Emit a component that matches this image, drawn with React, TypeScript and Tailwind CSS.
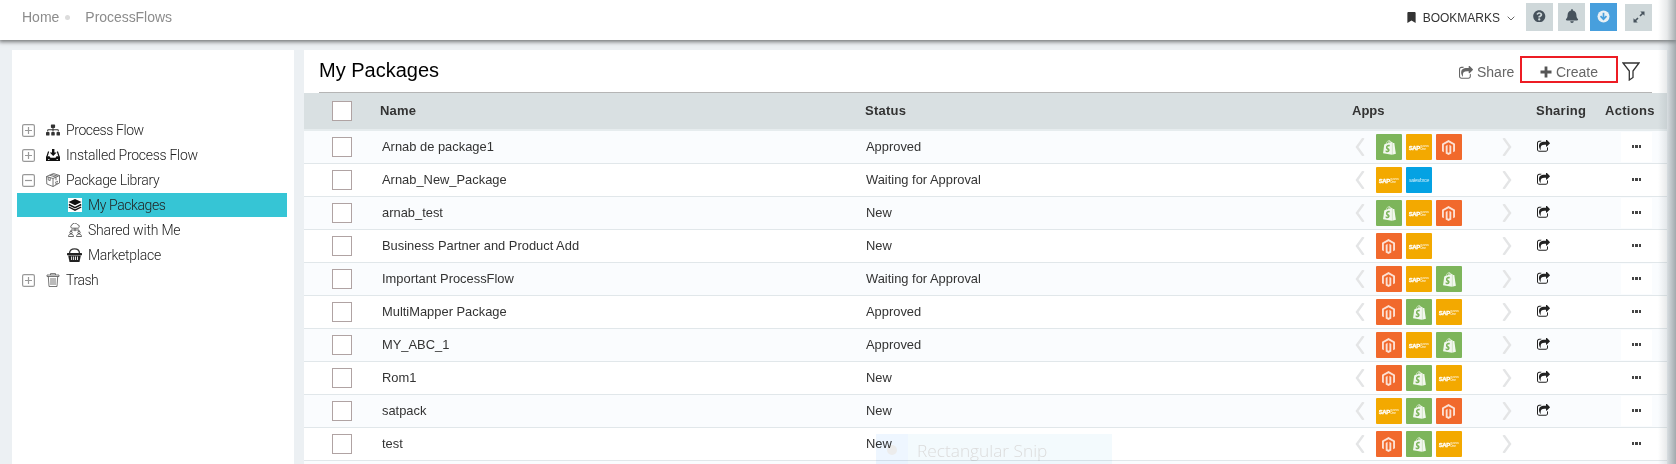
import React from "react";
import { FaSitemap, FaMagento, FaShopify, FaBell, FaBookmark, FaQuestionCircle } from "react-icons/fa";

const SHARE =
  "M1408 989v259q0 119-84.5 203.5t-203.5 84.5h-832q-119 0-203.5-84.5t-84.5-203.5v-832q0-119 84.5-203.5t203.5-84.5h255q13 0 22.5 9.5t9.5 22.5q0 27-26 32-77 26-133 60-10 4-16 4h-112q-66 0-113 47t-47 113v832q0 66 47 113t113 47h832q66 0 113-47t47-113v-214q0-19 18-29 28-13 54-37 16-16 35-8 21 9 21 29zm237-496l-384 384q-18 19-45 19-12 0-25-5-39-17-39-59v-192h-160q-323 0-438 131-119 137-74 473 3 23-20 34-8 2-12 2-16 0-26-13-10-14-21-31t-39.5-68.5-49.5-99.5-38.5-114-17.5-122q0-49 3.5-91t14-90 28-88 47-81.5 68.5-74 94.5-61.5 124.5-48.5 159.5-30.5 196.5-11h160v-192q0-42 39-59 13-5 25-5 26 0 45 19l384 384q19 19 19 45t-19 45z";

function ShareIcon({ className }: { className: string }) {
  return (
    <svg viewBox="0 30 1664 1536" className={className} fill="currentColor">
      <path d={SHARE} />
    </svg>
  );
}

function Toggle({ open }: { open?: boolean }) {
  return (
    <svg viewBox="0 0 13 13" className="h-[13px] w-[13px] shrink-0" fill="none" stroke="#999">
      <rect x="0.6" y="0.6" width="11.8" height="11.8" rx="1.5" strokeWidth="1.2" />
      <path d={open ? "M3 6.5h7" : "M3 6.5h7M6.5 3v7"} strokeWidth="1.2" />
    </svg>
  );
}

const InstallIcon = () => (
  <svg viewBox="0 0 14 14" className="h-[14px] w-[14px]">
    <path d="M6 1h2.4v3.5h2.2L7.2 8 3.800 4.500H6z" fill="#111" />
    <path d="M2.600 3.500 1 8.500M11.400 3.500 13 8.500" stroke="#111" strokeWidth="1.200" />
    <path d="M0 8.300h3.500l1 1.500h5l1-1.500H14V13H0z" fill="#111" />
    <path d="M2 11.500h1.500M10.500 11.500H12" stroke="#fff" strokeWidth="0.800" />
  </svg>
);

const BoxIcon = () => (
  <svg viewBox="0 0 14 14" className="h-[14px] w-[14px]" fill="none" stroke="#555" strokeWidth="0.8">
    <path d="M0.500 3.500 7.500 0.500 13.500 2.500V10L7 13.500 0.800 11zM0.500 3.500 7 5.500 13.500 2.500M7 5.500v8M3.500 2.200 10 4.200v3M5.500 1.400 12 3.200M2.200 4.100v2.800l2 .7V4.700" />
    <path d="M9 9.500l3-1.300M9 11.300l3-1.400" />
  </svg>
);

const LayersIcon = () => (
  <svg viewBox="0 0 14 14" className="h-[14px] w-[14px] bg-white">
    <path d="M7 1 13.500 4 7 7.200 0.500 4z" fill="#111" />
    <path d="M.8 6.500 7 9.600l6.200-3.100M.8 9 7 12.200 13.200 9" fill="none" stroke="#111" strokeWidth="1.400" />
  </svg>
);

const CloudUsersIcon = () => (
  <svg viewBox="0 0 14 14" className="h-[14px] w-[14px]" fill="none" stroke="#555" strokeWidth="0.9">
    <path d="M4 5.200a1.600 1.600 0 0 1-.1-3.100A3 3 0 0 1 9.400 1.600a1.900 1.900 0 0 1 .8 3.600zM7 5.200v3M3 8.200V7h8v1.200" />
    <circle cx="3" cy="9.500" r="1.200" />
    <circle cx="11" cy="9.500" r="1.200" />
    <path d="M.5 13.500c0-3.400 5-3.400 5 0zM8.500 13.500c0-3.400 5-3.400 5 0z" />
  </svg>
);

const BasketIcon = () => (
  <svg viewBox="0 0 15 14" className="h-[14px] w-[15px] shrink-0">
    <path d="M2.500 5.500C2.500 2.500 4.500.9 7.500.9s5 1.600 5 4.600" fill="none" stroke="#333" strokeWidth="1.300" />
    <rect x="0" y="5" width="15" height="2.300" rx="0.600" fill="#222" />
    <path d="M1.200 7.500h12.600L12.500 14h-10z" fill="#222" />
    <path d="M4.600 8.500v3.500M6.600 8.500v3.500M8.500 8.500v3.500M10.500 8.500v3.500" stroke="#fff" strokeWidth="0.900" />
  </svg>
);

const TrashIcon = () => (
  <svg viewBox="0 0 14 14" className="h-[14px] w-[14px]" fill="none" stroke="#666" strokeWidth="0.9">
    <path d="M1 3.500V2h12v1.500zM4.500 2V.6h5V2M2.300 3.500l.7 10h8l.7-10M5 5v7M7 5v7M9 5v7" />
  </svg>
);

type Node = { label: string; icon: React.ReactNode; toggle?: "plus" | "minus"; active?: boolean; track: string };
const nodes: Node[] = [
  { label: "Process Flow", toggle: "plus", icon: <FaSitemap size={14} color="#333" />, track: "tracking-[-0.4px]" },
  { label: "Installed Process Flow", toggle: "plus", icon: <InstallIcon />, track: "tracking-[-0.27px]" },
  { label: "Package Library", toggle: "minus", icon: <BoxIcon />, track: "tracking-[-0.3px]" },
  { label: "My Packages", icon: <LayersIcon />, active: true, track: "tracking-[-0.4px]" },
  { label: "Shared with Me", icon: <CloudUsersIcon />, track: "tracking-[-0.2px]" },
  { label: "Marketplace", icon: <BasketIcon />, track: "tracking-[-0.25px]" },
  { label: "Trash", toggle: "plus", icon: <TrashIcon />, track: "tracking-[-0.45px]" },
];

type App = "shop" | "sap" | "mag" | "sf";
const rows: { name: string; status: string; apps: App[]; share: boolean }[] = [
  { name: "Arnab de package1", status: "Approved", apps: ["shop", "sap", "mag"], share: true },
  { name: "Arnab_New_Package", status: "Waiting for Approval", apps: ["sap", "sf"], share: true },
  { name: "arnab_test", status: "New", apps: ["shop", "sap", "mag"], share: true },
  { name: "Business Partner and Product Add", status: "New", apps: ["mag", "sap"], share: true },
  { name: "Important ProcessFlow", status: "Waiting for Approval", apps: ["mag", "sap", "shop"], share: true },
  { name: "MultiMapper Package", status: "Approved", apps: ["mag", "shop", "sap"], share: true },
  { name: "MY_ABC_1", status: "Approved", apps: ["mag", "sap", "shop"], share: true },
  { name: "Rom1", status: "New", apps: ["mag", "shop", "sap"], share: true },
  { name: "satpack", status: "New", apps: ["sap", "shop", "mag"], share: true },
  { name: "test", status: "New", apps: ["mag", "shop", "sap"], share: false },
];

function Tile({ app }: { app: App }) {
  const base = "flex h-[26px] w-[26px] items-center justify-center rounded-[1px] text-white ";
  if (app === "shop") return <div className={base + "bg-[#7db55b]"}><FaShopify size={15} className="opacity-90" /></div>;
  if (app === "mag") return <div className={base + "bg-[#f1692c]"}><FaMagento size={15} className="-ml-px opacity-80" /></div>;
  if (app === "sf")
    return <div className={base + "bg-[#04a2e3] text-[5px] leading-none tracking-[-0.3px] text-white/80 italic"}>salesforce</div>;
  return (
    <div className={base + "bg-[#f3a900] pt-px leading-none"}>
      <span className="text-[6px] font-bold tracking-[-0.5px] [-webkit-text-stroke:0.3px_white]">SAP</span>
      <span className="ml-[0.5px] flex w-[9px] flex-col overflow-hidden text-[3px] leading-[2.5px] opacity-80">
        <span className="tracking-[-0.3px]">Business</span>
        <span className="font-bold">One</span>
      </span>
    </div>
  );
}

function Arrow({ right }: { right?: boolean }) {
  return (
    <svg viewBox="0 0 10 18" className="h-[18px] w-[10px] shrink-0" fill="none" stroke="#e4e5e6" strokeWidth="2.4">
      <path d={right ? "M1.500 0 8 9 1.500 18" : "M8.500 0 2 9 8.500 18"} />
    </svg>
  );
}

const cols = "grid grid-cols-[78px_484px_486px_186px_66px_63px]";
const Box = () => <div className="ml-7 h-5 w-5 border border-[#b0a3a3] bg-white" />;

export default function App() {
  return (
    <div className="relative flex h-[464px] w-[1676px] flex-col overflow-hidden bg-[#ecf0f3] font-['Liberation_Sans',Arial,sans-serif] text-[#333]">
      <header className="z-10 flex h-10 shrink-0 justify-between bg-white shadow-[0_1px_4px_1px_rgba(0,0,0,0.5)]">
        <div className="flex h-[35px] items-center pl-[22px] text-[14px] text-[#8c8c8c]">
          <span>Home</span>
          <span className="ml-[6px] h-[5px] w-[5px] rounded-full bg-[#dcdcdc]" />
          <span className="ml-[15px] tracking-[-0.05px]">ProcessFlows</span>
        </div>
        <div className="flex items-start pr-6">
          <div className="flex h-[35px] items-center">
            <FaBookmark size={11} className="w-[9px]" />
            <span className="ml-[7px] mt-px text-[12px]">BOOKMARKS</span>
            <svg viewBox="0 0 8 5" className="ml-[7px] mt-px h-[5px] w-2" fill="none" stroke="#666"><path d="M.7.700 4 4 7.300.700" /></svg>
          </div>
          <div className="ml-[11px] mt-[3px] flex h-7 w-[27px] items-center justify-center bg-[#cfd8da] text-[#46525c]"><FaQuestionCircle size={12.500} className="-mt-[2px]" /></div>
          <div className="ml-[5px] mt-[3px] flex h-7 w-[27px] items-center justify-center bg-[#cfd8da] text-[#46525c]"><FaBell size={14} className="-mt-[2px]" /></div>
          <div className="ml-[5px] mt-[3px] flex h-7 w-[27px] items-center justify-center bg-[#479fdd]">
            <svg viewBox="0 0 13 13" className="-mt-[2px] h-[13px] w-[13px]">
              <circle cx="6.500" cy="6.500" r="6" fill="#e8f0f5" />
              <path d="M6.500 2.800v6M3.500 6.200l3 3 3-3" fill="none" stroke="#479fdd" strokeWidth="1.700" />
            </svg>
          </div>
          <div className="ml-2 mt-1 flex h-[27px] w-[27px] items-center justify-center bg-[#cfd8da]">
            <svg viewBox="0 0 12 12" className="-mt-[2px] h-3 w-3" fill="#46525c">
              <path d="M7 5 10 2M5 7 2 10" stroke="#46525c" strokeWidth="1.600" />
              <path d="M7.300 .5h4.200v4.200zM.5 7.300v4.200h4.200z" />
            </svg>
          </div>
        </div>
      </header>

      <div className="mt-[10px] flex flex-1 gap-[10px] pl-3">
        <aside className="w-[282px] bg-white pl-[5px] pt-[68px] font-['Roboto','Open_Sans',sans-serif] text-[14px] font-light text-[#222]">
          {nodes.map((n) => (
            <div
              key={n.label}
              className={
                "flex h-[25px] w-[270px] items-center border-b border-transparent bg-clip-padding " +
                (n.toggle ? "pl-[5px] " : "pl-[50px] ") +
                (n.active ? "bg-[#36c5d5]" : "")
              }
            >
              {n.toggle && <Toggle open={n.toggle === "minus"} />}
              <span className={"flex w-[15px] shrink-0 justify-center " + (n.toggle ? "ml-[10px]" : "")}>{n.icon}</span>
              <span className={"ml-[6px] whitespace-nowrap " + n.track}>{n.label}</span>
            </div>
          ))}
        </aside>

        <main className="flex w-[1363px] flex-col bg-white">
          <div className="ml-[15px] mr-[15px] flex h-[43px] shrink-0 items-start justify-between border-b border-[#b5b5b5]">
            <h1 className="pt-[6px] text-[20px] leading-7 text-black">My Packages</h1>
            <div className="flex items-start pt-[6px] text-[14px] text-[#666]">
              <div className="flex h-[33px] items-center gap-1 pr-[6px]">
                <ShareIcon className="h-[13px] w-[14px]" />
                <span className="w-[37px] whitespace-nowrap">Share</span>
              </div>
              <div className="flex h-[27px] w-[98px] items-center justify-center gap-1 border-2 border-[#ed1c24] pt-[5px]">
                <svg viewBox="0 0 12 12" className="-mt-px h-3 w-3" stroke="#555" strokeWidth="2.800"><path d="M.5 6h11M6 .5v11" /></svg>
                <span>Create</span>
              </div>
              <svg viewBox="0 0 18 19" className="ml-1 mr-[12px] mt-[6px] h-[19px] w-[18px]" fill="none" stroke="#333" strokeWidth="1.300">
                <path d="M1 1h16L11 9v6.500L7.300 18V9z" />
              </svg>
            </div>
          </div>

          <div className={cols + " h-[38px] shrink-0 items-center border-b-2 border-[#e6ecee] bg-[#d9e0e2] text-[13px] font-bold"}>
            <Box />
            <span className="-ml-[2px] -mt-px tracking-[0.2px]">Name</span>
            <span className="-ml-px -mt-px tracking-[0.25px]">Status</span>
            <span className="-mt-px">Apps</span>
            <span className="-ml-[2px] -mt-px tracking-[0.25px]">Sharing</span>
            <span className="-mt-px pl-px tracking-[0.3px]">Actions</span>
          </div>

          {rows.map((r) => (
            <div key={r.name} className={cols + " h-[33px] shrink-0 items-center border-b border-[#e1e7ea] text-[12.900px] nth-[odd]:bg-[#fafcfe]"}>
              <Box />
              <span>{r.name}</span>
              <span>{r.status}</span>
              <div className="flex items-center pl-[3px]">
                <Arrow />
                <div className="ml-[11px] flex w-[126px] gap-1">
                  {r.apps.map((a) => <Tile key={a} app={a} />)}
                </div>
                <Arrow right />
              </div>
              <div>{r.share && <ShareIcon className="-ml-px -mt-[3px] h-3 w-[13px] text-[#222]" />}</div>
              <div className="ml-[17px] flex h-[30px] w-[31px] items-center justify-center gap-px bg-white">
                <span className="-mt-px h-[3px] w-[2.500px] bg-[#444]" />
                <span className="-mt-px h-[3px] w-[2.500px] bg-[#444]" />
                <span className="-mt-px h-[3px] w-[2.500px] bg-[#444]" />
              </div>
            </div>
          ))}
          <div className="h-1 bg-[#fafcfe]" />
        </main>
      </div>

      <div className="absolute left-[876px] top-[434px] z-10 flex h-[30px] w-[236px] bg-[#f3fafd] mix-blend-multiply">
        <div className="flex w-[32px] items-center justify-center bg-[#eef6ff]">
          <span className="mt-[2px] h-[10px] w-[10px] rounded-full bg-[#ececec]" />
        </div>
        <span className="pl-[9px] pt-[3px] font-['Open_Sans',sans-serif] text-[17.300px] font-light leading-7 text-[#dcdcdc]">Rectangular Snip</span>
      </div>
      <div className="absolute right-0 top-0 z-20 h-full w-[18px] bg-linear-to-r from-transparent via-[#8a9499]/20 to-[#7a8488]/65" />
    </div>
  );
}
